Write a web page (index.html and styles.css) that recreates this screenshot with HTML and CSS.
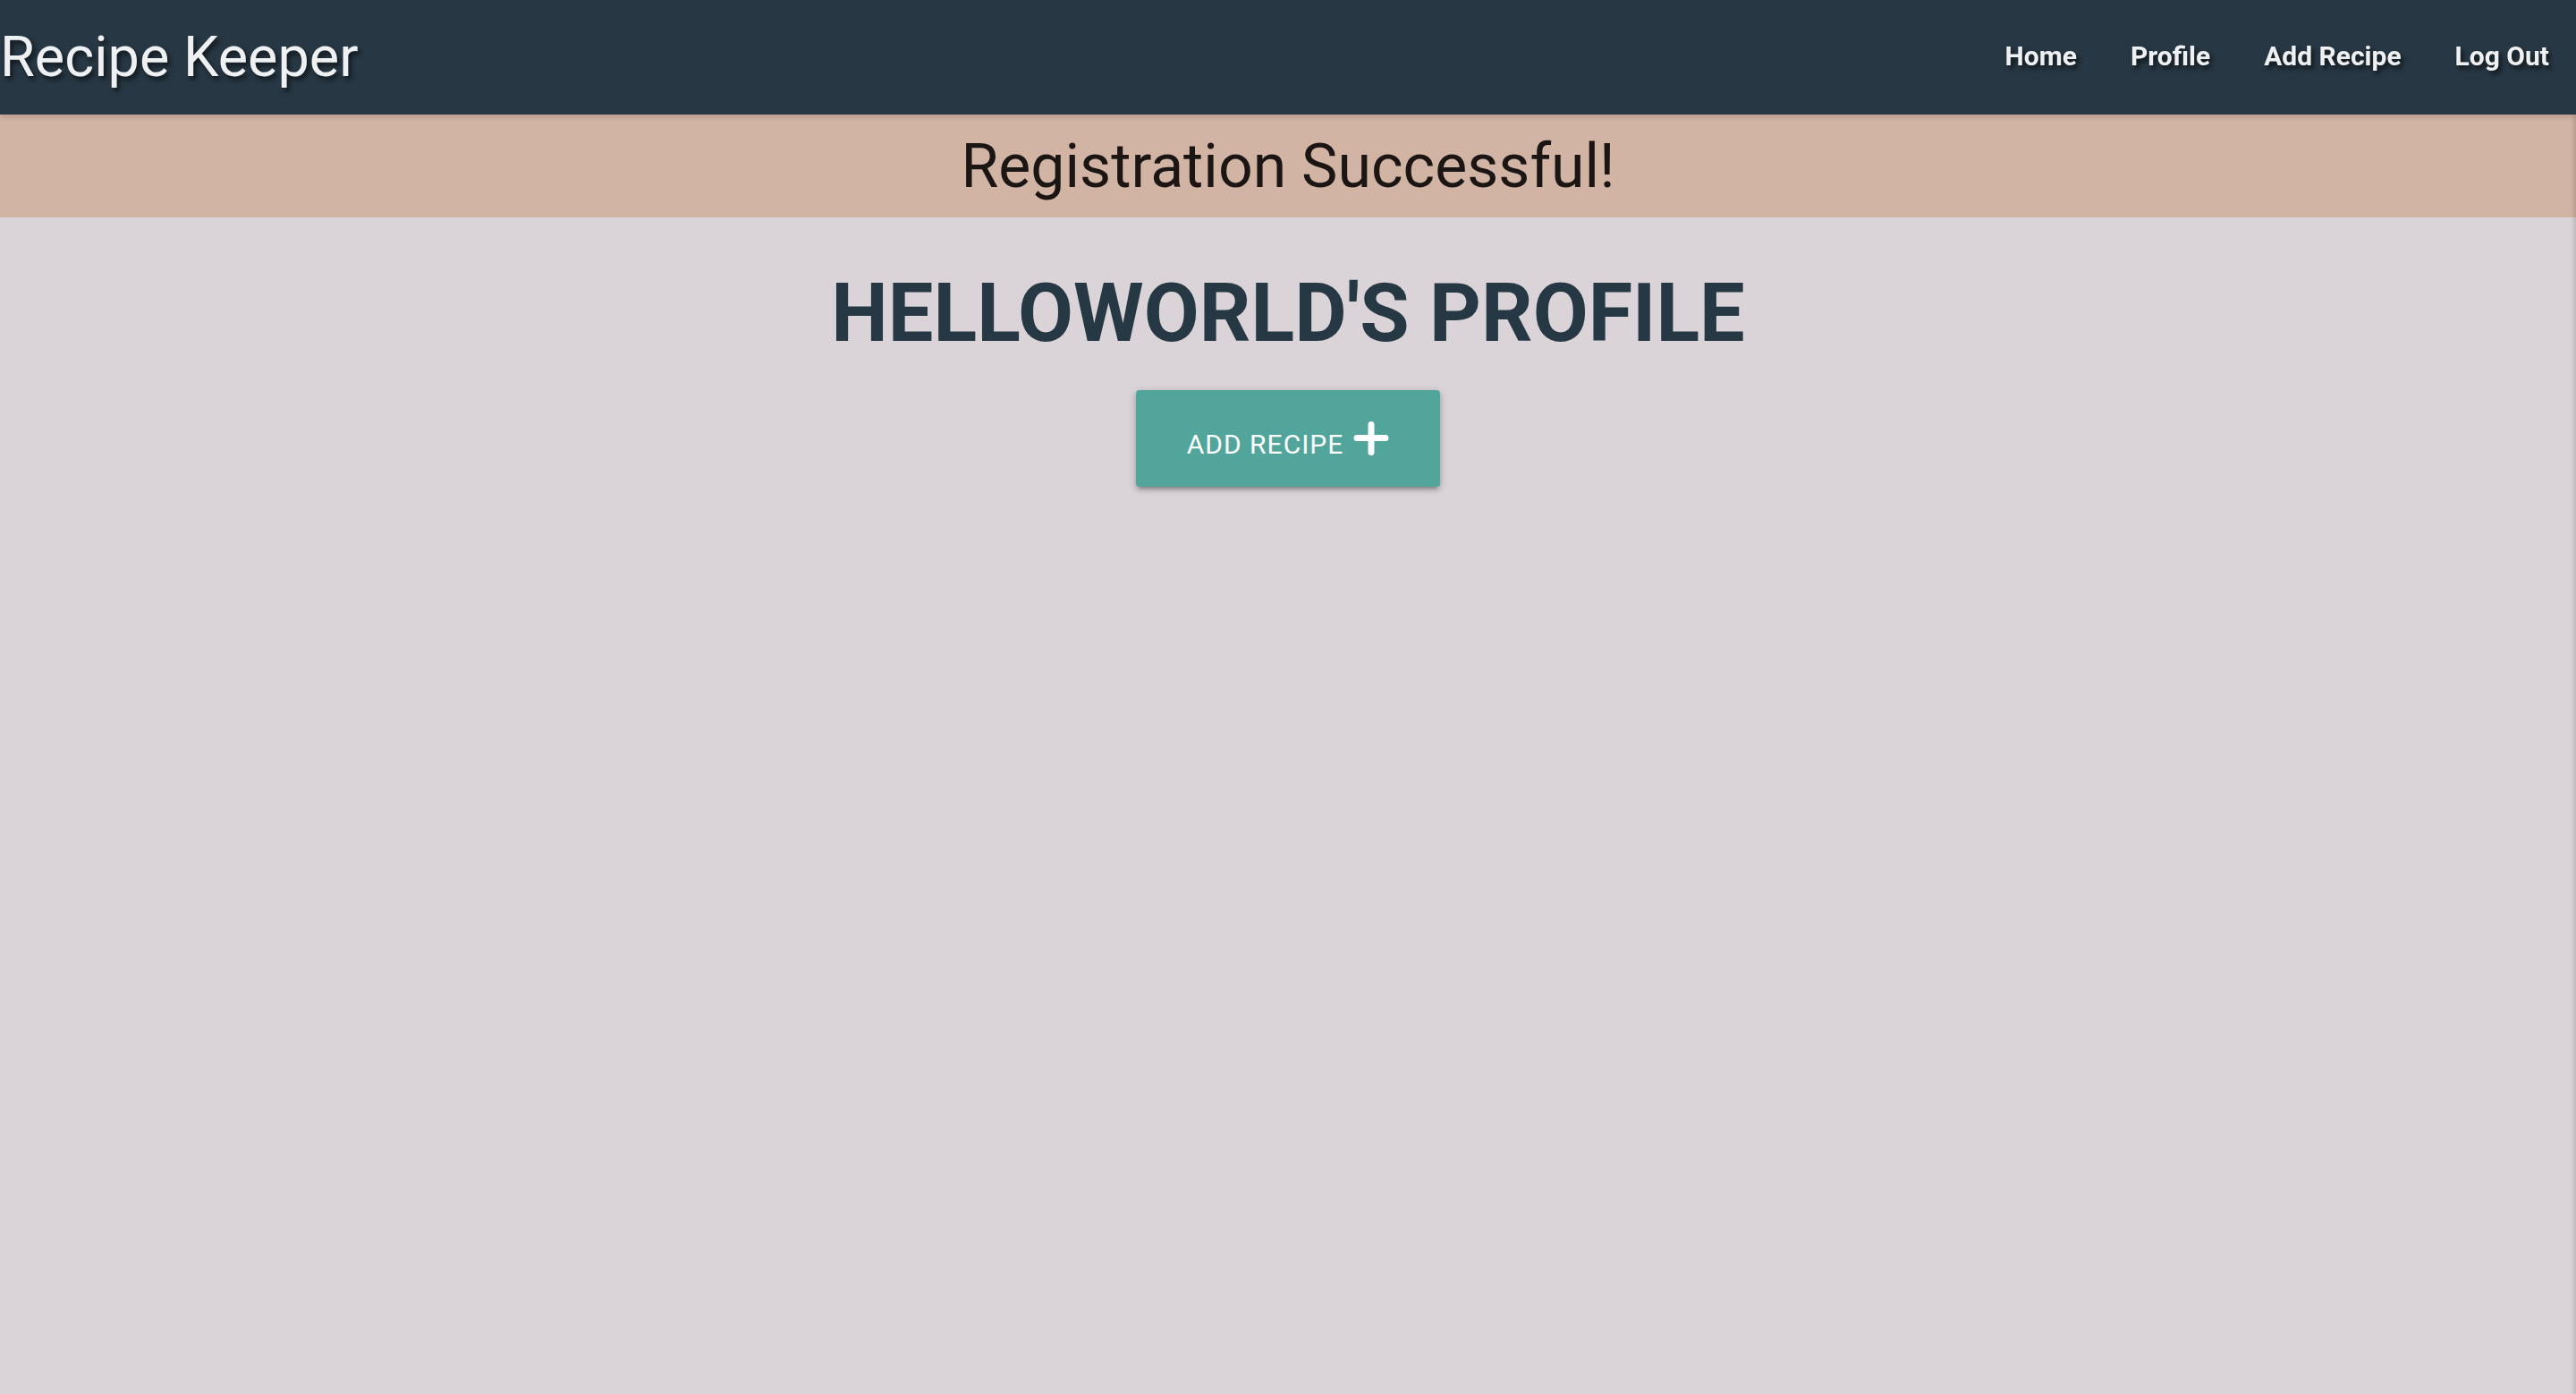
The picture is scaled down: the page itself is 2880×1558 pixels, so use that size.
FILE: index.html
```html
<!DOCTYPE html>
<html lang="en">
<head>
<meta charset="utf-8">
<title>Recipe Keeper</title>
<link rel="stylesheet" href="styles.css">
</head>
<body>
<nav class="navbar">
  <a class="brand" href="#">Recipe Keeper</a>
  <ul class="nav-links">
    <li><a href="#">Home</a></li>
    <li><a href="#">Profile</a></li>
    <li><a href="#">Add Recipe</a></li>
    <li><a href="#">Log Out</a></li>
  </ul>
</nav>
<div class="flash">
  <h4 class="flash-text">Registration Successful!</h4>
</div>
<main class="content">
  <h3 class="profile-title">HELLOWORLD'S PROFILE</h3>
  <a class="btn-add" href="#">
    <span class="btn-label">Add Recipe</span>
    <svg class="btn-icon" width="40" height="38" viewBox="0 0 40 38" aria-hidden="true">
      <path d="M20 3.5V34.5M4 18.5H36" stroke="#ffffff" stroke-width="7" stroke-linecap="round" fill="none"/>
    </svg>
  </a>
</main>
<div class="edge-shade"></div>
</body>
</html>
```
FILE: styles.css
```css
html, body {
  margin: 0;
  padding: 0;
  height: 100%;
}
body {
  background: #dad4d8;
  font-family: Roboto, "Liberation Sans", Arial, sans-serif;
  overflow: hidden;
}
a { text-decoration: none; }

.navbar {
  height: 128px;
  background: #273743;
  display: flex;
  justify-content: space-between;
  align-items: stretch;
  box-shadow: 0 4px 4px 0 rgba(0,0,0,0.10);
  position: relative;
  z-index: 2;
}
.brand {
  font-size: 63px;
  line-height: 128px;
  color: #eef0f2;
  font-weight: 400;
  white-space: nowrap;
  text-shadow: 3px 4px 5px rgba(0,0,0,0.55);
}
.nav-links {
  list-style: none;
  margin: 0;
  padding: 0;
  display: flex;
}
.nav-links a {
  display: block;
  padding: 0 30px;
  font-size: 30px;
  font-weight: 700;
  line-height: 126px;
  color: #eef0f2;
  text-shadow: 3px 4px 5px rgba(0,0,0,0.6);
  white-space: nowrap;
}

.flash {
  height: 115px;
  background: #d2b4a4;
  display: flex;
  justify-content: center;
  align-items: center;
}
.flash-text {
  margin: 0;
  font-size: 68px;
  font-weight: 400;
  line-height: 1;
  color: #1b1614;
}

.content {
  display: flex;
  flex-direction: column;
  align-items: center;
}
.profile-title {
  margin: 57px 0 34px;
  font-size: 90px;
  line-height: 102px;
  font-weight: 700;
  color: #263844;
  white-space: nowrap;
}
.btn-add {
  height: 108px;
  padding: 0 57px;
  box-sizing: border-box;
  background: #52a59a;
  border-radius: 4px;
  display: flex;
  align-items: center;
  gap: 11px;
  color: #ffffff;
  box-shadow: 0 4px 4px 0 rgba(0,0,0,0.14), 0 6px 2px -4px rgba(0,0,0,0.12), 0 2px 10px 0 rgba(0,0,0,0.2);
}
.btn-label {
  font-size: 30px;
  line-height: 30px;
  text-transform: uppercase;
  letter-spacing: 1px;
  margin-top: 14px;
  white-space: nowrap;
}
.btn-icon {
  display: block;
  flex: none;
}

.edge-shade {
  position: fixed;
  top: 128px;
  right: 0;
  bottom: 0;
  width: 6px;
  background: linear-gradient(to right, rgba(0,0,0,0), rgba(0,0,0,0.12));
  pointer-events: none;
}
```
